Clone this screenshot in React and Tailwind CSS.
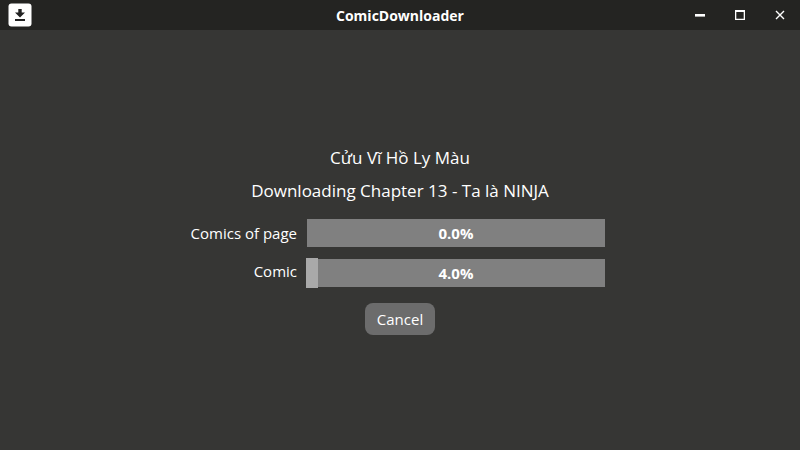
function ProgressRow({ id, label, value, labelClass }) {
  return (
    <>
      <label htmlFor={id} className={`text-right text-[15px] leading-6 whitespace-nowrap ${labelClass}`}>{label}</label>
      <div className="relative h-7 bg-[#808080]">
        <progress id={id} max="100" value={value} className="sr-only" />
        <div className={value > 0 ? "absolute -inset-y-px -left-px bg-[#a9a9a9]" : "hidden"} style={{ width: `${value}%` }} />
        <span className="relative block text-center text-[15px] leading-7 font-bold">{value.toFixed(1)}%</span>
      </div>
    </>
  );
}

export default function App() {
  return (
    <div className="flex min-h-screen flex-col bg-[#363634] font-['Open_Sans','Noto_Sans',sans-serif] text-white">
      <header className="grid h-[30px] grid-cols-[1fr_auto_1fr] items-center bg-[#242422]">
        <svg className="ml-2 size-6" viewBox="0 0 24 24" aria-hidden="true">
          <rect x="0.500" y="0.500" width="23" height="23" rx="3" fill="#fff" />
          <path d="M10.300 6h3.400v3.500H17l-5 5-5-5h3.300zM7 16h10v2H7z" fill="#222" />
        </svg>
        <h1 className="text-[14px] font-bold">ComicDownloader</h1>
        <div className="flex h-full justify-end">
          <button aria-label="Minimize" className="grid w-10 place-items-center"><svg width="12" height="12"><path d="M1 6.300h10" stroke="#fff" strokeWidth="2.600" /></svg></button>
          <button aria-label="Maximize" className="grid w-10 place-items-center"><svg width="12" height="12"><path d="M1 1h10v10H1zM2.300 3v6.700h7.400V3z" fill="#fff" fillRule="evenodd" /></svg></button>
          <button aria-label="Close" className="grid w-10 place-items-center"><svg width="12" height="12"><path d="M2 2l8 8M10 2l-8 8" stroke="#fff" strokeWidth="1.400" /></svg></button>
        </div>
      </header>
      <main className="flex grow flex-col items-center justify-center pb-1">
        <h2 className="text-[17px] leading-[33px]">Cửu Vĩ Hồ Ly Màu</h2>
        <p className="text-[17px] leading-[33px]">Downloading Chapter 13 - Ta là NINJA</p>
        <div className="mt-3 grid grid-cols-[107px_298px] gap-x-2.5 gap-y-3 pr-[5px]">
          <ProgressRow id="page" label="Comics of page" value={0} labelClass="self-center" />
          <ProgressRow id="comic" label="Comic" value={4} labelClass="self-start" />
        </div>
        <button className="mt-4 h-8 w-[70px] rounded-lg bg-[#6c6c6c] text-[15px]">Cancel</button>
      </main>
    </div>
  );
}
